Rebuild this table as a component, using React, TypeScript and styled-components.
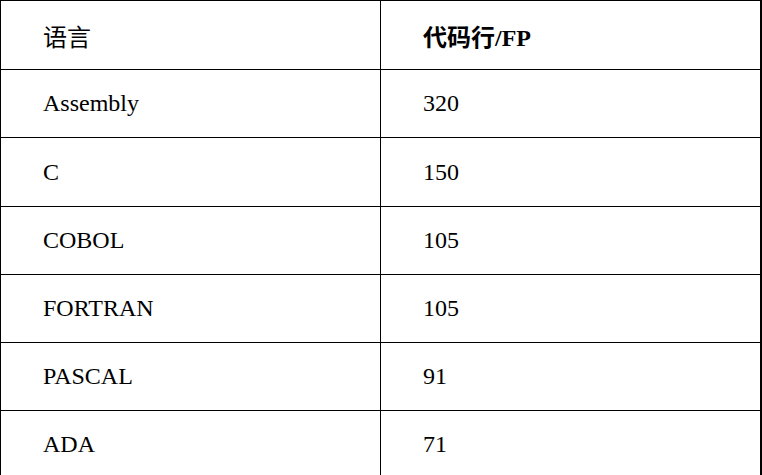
import React from "react";
import styled, { createGlobalStyle } from "styled-components";

const GlobalStyle = createGlobalStyle`
  html, body {
    margin: 0;
    padding: 0;
    background: #ffffff;
  }
`;

const StyledPage = styled.div`
  width: 762px;
  height: 475px;
  overflow: hidden;
  background: #ffffff;
`;

// The black background shows through the 1px gaps and padding as cell borders
const StyledGrid = styled.div`
  display: grid;
  grid-template-columns: 379px 379px;
  grid-template-rows: 68px 67px 68px 67px 67px 67px 67px;
  gap: 1px;
  padding: 1px 2px 0 1px;
  background: #000000;
  width: max-content;
`;

const StyledCell = styled.div<{ $header?: boolean; $bold?: boolean }>`
  display: flex;
  align-items: center;
  padding-left: 42px;
  background: #ffffff;
  color: #000000;
  font-family: "Liberation Serif", "Noto Sans CJK SC", serif;
  font-size: 24px;
  font-weight: ${(props) => (props.$bold ? 700 : 400)};
  white-space: nowrap;
`;

const rows: [string, string][] = [
  ["Assembly", "320"],
  ["C", "150"],
  ["COBOL", "105"],
  ["FORTRAN", "105"],
  ["PASCAL", "91"],
  ["ADA", "71"],
];

export default function App() {
  return (
    <StyledPage>
      <GlobalStyle />
      <StyledGrid>
        <StyledCell $header>语言</StyledCell>
        <StyledCell $header $bold>
          代码行/FP
        </StyledCell>
        {rows.map(([lang, lines]) => (
          <React.Fragment key={lang}>
            <StyledCell>{lang}</StyledCell>
            <StyledCell>{lines}</StyledCell>
          </React.Fragment>
        ))}
      </StyledGrid>
    </StyledPage>
  );
}
